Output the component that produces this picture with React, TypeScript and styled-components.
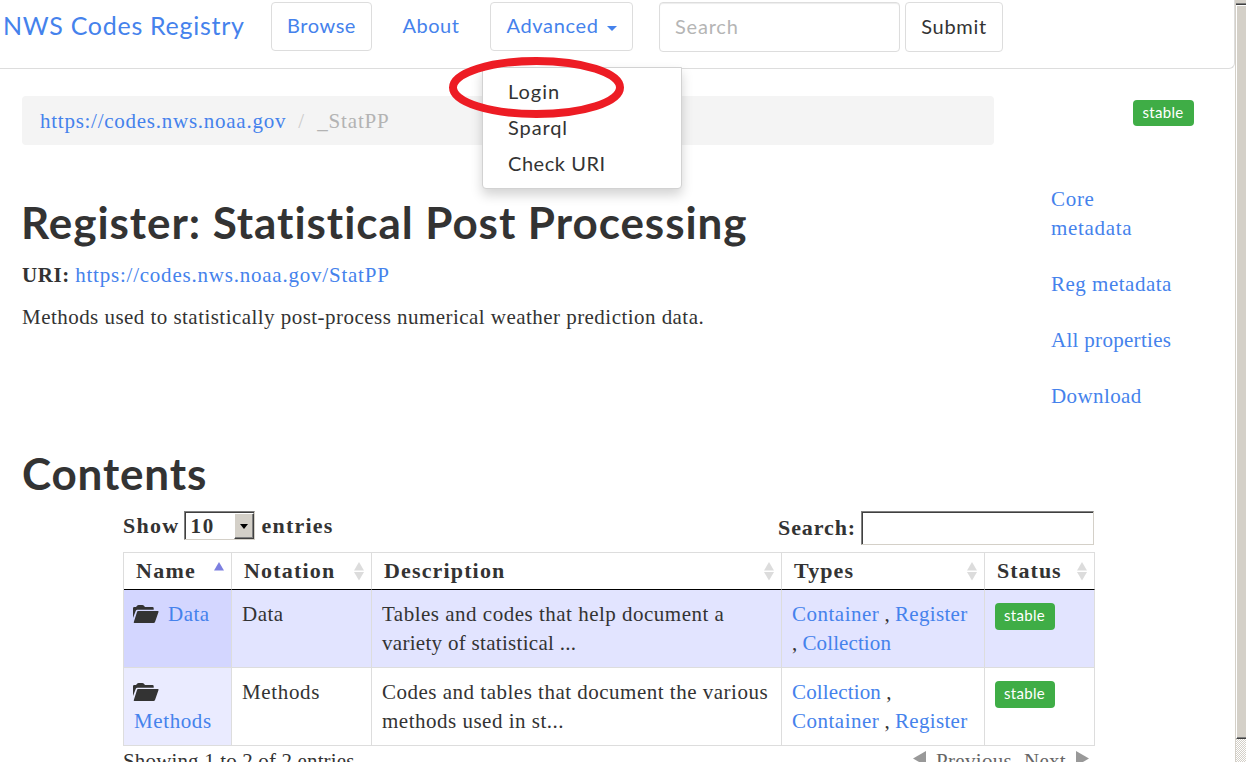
import React from "react";
import styled, { createGlobalStyle } from "styled-components";

const sans = `Lato, "Open Sans", sans-serif`;
const serif = `"Liberation Serif", Georgia, serif`;
const blue = "#4582ec";
const ink = "#333";
const line = "#ddd";

const Global = createGlobalStyle`
  html, body { margin: 0; padding: 0; overflow: hidden; background: #fff; }
  * { box-sizing: border-box; }
`;

const Screen = styled.div`
  display: flex;
  width: 1246px;
  height: 762px;
  overflow: hidden;
  color: ${ink};
  font: 21px/29px ${serif};
`;

const Page = styled.div`
  width: 1235px;
  height: 762px;
  overflow: hidden;
`;

const T = styled.span<{ $ls?: number }>`
  letter-spacing: ${(p) => p.$ls ?? 0.5}px;
  white-space: nowrap;
`;

const Link = styled(T)`
  color: ${blue};
`;

const Navbar = styled.nav`
  position: relative;
  display: flex;
  align-items: flex-start;
  height: 69px;
  padding: 2px 0 0 3px;
  border: solid ${line};
  border-width: 0 1px 1px 0;
  border-bottom-right-radius: 6px;
  font-family: ${sans};
  font-size: 20px;
`;

const Brand = styled.div`
  width: 268px;
  padding-top: 9px;
  color: ${blue};
  font-size: 25px;
`;

const NavButton = styled.div<{ $w: number; $h?: number; $gap?: number; $plain?: boolean; $dark?: boolean }>`
  display: flex;
  align-items: center;
  justify-content: center;
  gap: 8px;
  width: ${(p) => p.$w}px;
  height: ${(p) => p.$h ?? 49}px;
  margin-right: ${(p) => p.$gap ?? 0}px;
  padding-bottom: 2px;
  border: 1px solid ${(p) => (p.$plain ? "transparent" : line)};
  border-radius: 4px;
  color: ${(p) => (p.$dark ? ink : blue)};
`;

const Caret = styled.i`
  margin-top: 5px;
  border: 5px solid transparent;
  border-top-color: ${blue};
  border-bottom: 0;
`;

const SearchBox = styled.div`
  display: flex;
  align-items: center;
  width: 241px;
  height: 50px;
  margin-right: 5px;
  padding: 0 0 2px 15px;
  border: 1px solid ${line};
  border-radius: 4px;
  box-shadow: inset 0 1px 1px rgba(0, 0, 0, 0.075);
  color: #b5b5b5;
`;

const Menu = styled.div`
  position: absolute;
  top: 67px;
  left: 482px;
  width: 200px;
  height: 122px;
  padding: 5px 0 0 25px;
  border: 1px solid #d2d2d2;
  border-radius: 0 0 4px 4px;
  background: #fff;
  box-shadow: 0 6px 12px rgba(0, 0, 0, 0.175);
`;

const MenuItem = styled.div`
  height: 36px;
  line-height: 36px;
`;

const Ring = styled.svg`
  position: absolute;
  top: 56px;
  left: 448px;
`;

const Top = styled.div`
  display: flex;
  height: 352px;
  padding: 27px 0 0 22px;
`;

const Main = styled.div`
  width: 972px;
`;

const Crumbs = styled.div`
  display: flex;
  align-items: center;
  height: 49px;
  padding: 2px 0 0 18px;
  border-radius: 4px;
  background: #f4f4f4;
`;

const Sep = styled.span`
  width: 31px;
  padding-left: 12px;
  color: #ccc;
`;

const Current = styled(T)`
  color: #b3b3b3;
`;

const Heading = styled.h1`
  margin: 0;
  color: ${ink};
  font: 700 44px/48px ${sans};
`;

const Title = styled(Heading)`
  margin: 53px 0 0 -1px;
`;

const Para = styled.p<{ $mt: number }>`
  margin: ${(p) => p.$mt}px 0 0;
`;

const Side = styled.aside`
  display: flex;
  flex-direction: column;
  width: 200px;
  padding: 4px 0 0 57px;
`;

const Badge = styled.span`
  display: flex;
  flex-shrink: 0;
  align-items: center;
  justify-content: center;
  width: 60px;
  height: 27px;
  padding: 0 1px 3px 0;
  border-radius: 4px;
  background: #3fad46;
  color: #fff;
  font: 15px/20px ${sans};
`;

const SideBadge = styled(Badge)`
  width: 61px;
  height: 26px;
  padding-bottom: 2px;
  margin: 0 0 59px 82px;
`;

const SideLink = styled(Link)`
  display: block;
  margin-bottom: 27px;
`;

const Contents = styled.section`
  padding: 28px 0 0 22px;
`;

const Wrap = styled.div`
  width: 972px;
  margin-left: 101px;
`;

const Controls = styled.div`
  display: flex;
  justify-content: space-between;
  height: 55px;
  padding-top: 14px;
  font-size: 22px;
  font-weight: 700;
`;

const Control = styled.div<{ $top?: number }>`
  display: flex;
  align-items: flex-start;
  padding-top: ${(p) => p.$top ?? 0}px;
`;

const Select = styled.div`
  display: flex;
  justify-content: space-between;
  width: 71px;
  height: 29px;
  margin: 0 7px 0 4px;
  border: 1px solid;
  border-color: #808080 #d4d0c8 #d4d0c8 #808080;
  box-shadow: inset 1px 1px 0 #404040;
  padding: 2px 0 0 6px;
  line-height: 25px;
  font-size: 21px;
`;

const SelectButton = styled.span`
  display: flex;
  align-items: center;
  justify-content: center;
  width: 20px;
  height: 26px;
  margin-top: -1px;
  border: 1px solid;
  border-color: #fff #404040 #404040 #fff;
  box-shadow: inset -1px -1px 0 #808080;
  background: #d4d0c8;
`;

const SelectArrow = styled.i`
  border: 4.5px solid transparent;
  border-top: 5px solid #000;
  border-bottom: 0;
`;

const Input = styled.div`
  width: 233px;
  height: 34px;
  margin: -2px 1px 0 5px;
  border: 1px solid;
  border-color: #808080 #d4d0c8 #d4d0c8 #808080;
  box-shadow: inset 1px 1px 0 #404040;
`;

const Table = styled.table`
  width: 972px;
  border-spacing: 0;
  border-left: 1px solid ${line};
  table-layout: fixed;
`;

const Th = styled.th<{ $w: number }>`
  width: ${(p) => p.$w}px;
  height: 38px;
  padding: 0 4px 0 12px;
  border: solid ${line};
  border-width: 1px 1px 1px 0;
  border-bottom-color: #000;
  font-size: 22px;
  text-align: left;
`;

const ThInner = styled.div`
  display: flex;
  align-items: center;
  justify-content: space-between;
  height: 36px;
`;

const ThLabel = styled(T)`
  padding-bottom: 2px;
`;

const Td = styled.td<{ $bg?: string }>`
  height: 78px;
  padding: 10px 0 9px 10px;
  border: solid ${line};
  border-width: 0 1px 1px 0;
  background: ${(p) => p.$bg ?? "#fff"};
  vertical-align: top;
`;

const Cell = styled.div`
  height: 58px;
`;

const StatusCell = styled(Cell)`
  padding-top: 3px;
`;

const Footer = styled.div`
  display: flex;
  justify-content: space-between;
  height: 32px;
  padding-top: 1px;
`;

const Pager = styled.div`
  display: flex;
  align-items: flex-start;
  color: #666;
  padding-right: 5px;
`;

const PagerGap = styled.span`
  width: 12px;
`;

const PagerArrow = styled.svg`
  margin: 3px 9px 0;
  &:first-child { margin-left: 0; }
  &:last-child { margin-right: 0; }
`;

const Folder = styled.svg`
  margin: 0 9px 0 -1px;
  vertical-align: -2px;
`;

const Scrollbar = styled.div`
  display: flex;
  flex-direction: column;
  width: 11px;
  height: 762px;
  border-left: 1px solid #d4d0c8;
  background: repeating-conic-gradient(#d4d0c8 0 25%, #fff 0 50%) 0 0 / 2px 2px;
`;

const ScrollButton = styled.div`
  height: 5px;
  border-bottom: 1px solid #404040;
  box-shadow: inset 0 -1px 0 #808080;
  background: #d4d0c8;
`;

const Thumb = styled.div`
  height: 734px;
  border: solid #fff;
  border-width: 1px 0 0 1px;
  border-bottom: 1px solid #404040;
  box-shadow: inset 0 -1px 0 #808080;
  background: #d4d0c8;
`;

const FolderIcon = () => (
  <Folder width="26" height="18" viewBox="0 0 26 18" fill={ink}>
    <path d="M0 13V3.2Q0 2 1.2 2H3L4.3.6Q4.8 0 5.6 0H9.4Q10.2 0 10.7.6L12 2H19.5Q20.7 2 20.7 3.2V4.7H4.3Q3.2 4.7 2.8 5.7Z" />
    <path d="M5 6H24.8Q25.9 6 25.5 7L22.1 16.8Q21.7 18 20.5 18H1.4Q.4 18 .8 17L4 6.9Q4.3 6 5 6Z" />
  </Folder>
);

const SortIcon = ({ active }: { active?: boolean }) => (
  <svg width="15" height="20" viewBox="0 0 15 20">
    <path d="M7 1L12 9.5H2Z" fill={active ? "#7c7fe0" : "#dcdcdc"} />
    {!active && <path d="M2 11H12L7 19.5Z" fill="#dcdcdc" />}
  </svg>
);

const columns = [
  { label: "Name", w: 108, ls: 1.3 },
  { label: "Notation", w: 140, ls: 1.2 },
  { label: "Description", w: 410, ls: 1.15 },
  { label: "Types", w: 203, ls: 1.1 },
  { label: "Status", w: 110, ls: 1 },
];

export default function App() {
  return (
    <Screen>
      <Global />
      <Page>
        <Navbar>
          <Brand><T $ls={0.72}>NWS Codes Registry</T></Brand>
          <NavButton $w={101} $gap={14}><T $ls={0.55}>Browse</T></NavButton>
          <NavButton $w={90} $gap={14} $plain><T $ls={0.5}>About</T></NavButton>
          <NavButton $w={143} $gap={26}><T $ls={0.65}>Advanced</T><Caret /></NavButton>
          <SearchBox><T $ls={0.8}>Search</T></SearchBox>
          <NavButton $w={98} $h={50} $dark><T $ls={0.7}>Submit</T></NavButton>
          <Menu>
            <MenuItem><T $ls={1}>Login</T></MenuItem>
            <MenuItem><T $ls={0.9}>Sparql</T></MenuItem>
            <MenuItem><T $ls={0.55}>Check URI</T></MenuItem>
          </Menu>
          <Ring width="178" height="63" viewBox="0 0 178 63">
            <ellipse cx="88.5" cy="31.5" rx="83.5" ry="26.5" fill="none" stroke="#ed1c24" strokeWidth="8" />
          </Ring>
        </Navbar>

        <Top>
          <Main>
            <Crumbs>
              <Link $ls={0.74}>https://codes.nws.noaa.gov</Link>
              <Sep>/</Sep>
              <Current $ls={0.85}>_StatPP</Current>
            </Crumbs>
            <Title><T $ls={0.95}>Register: Statistical Post Processing</T></Title>
            <Para $mt={15}><b><T $ls={0.6}>URI:</T></b> <Link $ls={0.78}>https://codes.nws.noaa.gov/StatPP</Link></Para>
            <Para $mt={13}><T $ls={0.46}>Methods used to statistically post-process numerical weather prediction data.</T></Para>
          </Main>
          <Side>
            <SideBadge><T $ls={0.3}>stable</T></SideBadge>
            <SideLink $ls={0.7}>Core<br />metadata</SideLink>
            <SideLink>Reg metadata</SideLink>
            <SideLink $ls={0.3}>All properties</SideLink>
            <SideLink $ls={0.4}>Download</SideLink>
          </Side>
        </Top>

        <Contents>
          <Heading><T $ls={0.85}>Contents</T></Heading>
          <Wrap>
            <Controls>
              <Control>
                <T $ls={1.3}>Show</T>
                <Select>
                  <T $ls={1.6}>10</T>
                  <SelectButton><SelectArrow /></SelectButton>
                </Select>
                <T $ls={1.2}>entries</T>
              </Control>
              <Control $top={2}>
                <T $ls={0.9}>Search:</T>
                <Input />
              </Control>
            </Controls>
            <Table>
              <thead>
                <tr>
                  {columns.map((c, i) => (
                    <Th key={c.label} $w={c.w}>
                      <ThInner><ThLabel $ls={c.ls}>{c.label}</ThLabel><SortIcon active={i === 0} /></ThInner>
                    </Th>
                  ))}
                </tr>
              </thead>
              <tbody>
                <tr>
                  <Td $bg="#d3d6ff"><Cell><FolderIcon /><Link>Data</Link></Cell></Td>
                  <Td $bg="#e2e4ff"><Cell><T>Data</T></Cell></Td>
                  <Td $bg="#e2e4ff"><Cell><T>Tables and codes that help document a</T><br /><T $ls={0.3}>variety of statistical ...</T></Cell></Td>
                  <Td $bg="#e2e4ff"><Cell><Link $ls={0.5}>Container</Link> , <Link $ls={0.3}>Register</Link><br />, <Link $ls={0.1}>Collection</Link></Cell></Td>
                  <Td $bg="#e2e4ff"><StatusCell><Badge><T $ls={0.3}>stable</T></Badge></StatusCell></Td>
                </tr>
                <tr>
                  <Td $bg="#eaebff"><Cell><FolderIcon /><br /><Link $ls={0.6}>Methods</Link></Cell></Td>
                  <Td><Cell><T $ls={0.65}>Methods</T></Cell></Td>
                  <Td><Cell><T>Codes and tables that document the various</T><br /><T>methods used in st...</T></Cell></Td>
                  <Td><Cell><Link $ls={0.15}>Collection</Link> ,<br /><Link $ls={0.5}>Container</Link> , <Link $ls={0.3}>Register</Link></Cell></Td>
                  <Td><StatusCell><Badge><T $ls={0.3}>stable</T></Badge></StatusCell></Td>
                </tr>
              </tbody>
            </Table>
            <Footer>
              <T $ls={0.15}>Showing 1 to 2 of 2 entries</T>
              <Pager>
                <PagerArrow width="15" height="17" viewBox="0 0 15 17"><path d="M14 1V16L1 8.5Z" fill="#999" /></PagerArrow>
                <T $ls={0.3}>Previous</T>
                <PagerGap />
                <T $ls={0.3}>Next</T>
                <PagerArrow width="15" height="17" viewBox="0 0 15 17"><path d="M1 1V16L14 8.5Z" fill="#999" /></PagerArrow>
              </Pager>
            </Footer>
          </Wrap>
        </Contents>
      </Page>
      <Scrollbar>
        <ScrollButton />
        <Thumb />
      </Scrollbar>
    </Screen>
  );
}
